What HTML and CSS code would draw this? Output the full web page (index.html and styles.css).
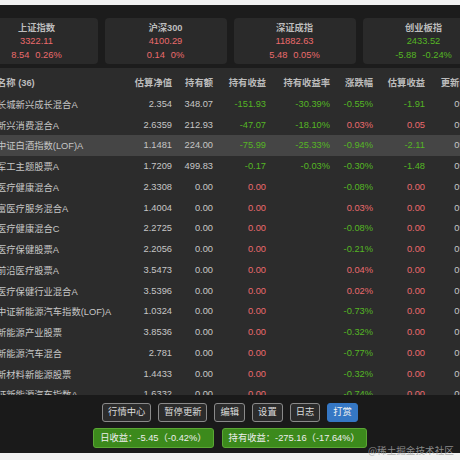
FILE: index.html
```html
<!DOCTYPE html>
<html lang="zh">
<head>
<meta charset="utf-8">
<link rel="stylesheet" href="styles.css">
</head>
<body>
<div class="app">
  <div class="scroller">
    <div class="cards">
      <div class="card"><div class="ct">上证指数</div><div class="up">3322.11</div><div class="up">8.54<span class="pct">0.26%</span></div></div>
      <div class="card"><div class="ct">沪深300</div><div class="up">4100.29</div><div class="up">0.14<span class="pct">0%</span></div></div>
      <div class="card"><div class="ct">深证成指</div><div class="up">11882.63</div><div class="up">5.48<span class="pct">0.05%</span></div></div>
      <div class="card"><div class="ct">创业板指</div><div class="down">2433.52</div><div class="down">-5.88<span class="pct">-0.24%</span></div></div>
    </div>
    <div class="table">
      <div class="row head"><span class="name">名称 (36)</span><span>估算净值</span><span>持有额</span><span>持有收益</span><span>持有收益率</span><span>涨跌幅</span><span>估算收益</span><span>更新时间</span></div>
      <div class="row"><span class="name">长城新兴成长混合A</span><span>2.354</span><span>348.07</span><span class="down">-151.93</span><span class="down">-30.39%</span><span class="down">-0.55%</span><span class="down">-1.91</span><span>09-23</span></div>
      <div class="row"><span class="name">新兴消费混合A</span><span>2.6359</span><span>212.93</span><span class="down">-47.07</span><span class="down">-18.10%</span><span class="up">0.03%</span><span class="up">0.05</span><span>09-23</span></div>
      <div class="row hl"><span class="name">中证白酒指数(LOF)A</span><span>1.1481</span><span>224.00</span><span class="down">-75.99</span><span class="down">-25.33%</span><span class="down">-0.94%</span><span class="down">-2.11</span><span>09-23</span></div>
      <div class="row"><span class="name">军工主题股票A</span><span>1.7209</span><span>499.83</span><span class="down">-0.17</span><span class="down">-0.03%</span><span class="down">-0.30%</span><span class="down">-1.48</span><span>09-23</span></div>
      <div class="row"><span class="name">医疗健康混合A</span><span>2.3308</span><span>0.00</span><span class="up">0.00</span><span></span><span class="down">-0.08%</span><span class="up">0.00</span><span>09-23</span></div>
      <div class="row"><span class="name">富医疗服务混合A</span><span>1.4004</span><span>0.00</span><span class="up">0.00</span><span></span><span class="up">0.03%</span><span class="up">0.00</span><span>09-23</span></div>
      <div class="row"><span class="name">医疗健康混合C</span><span>2.2725</span><span>0.00</span><span class="up">0.00</span><span></span><span class="down">-0.08%</span><span class="up">0.00</span><span>09-23</span></div>
      <div class="row"><span class="name">医疗保健股票A</span><span>2.2056</span><span>0.00</span><span class="up">0.00</span><span></span><span class="down">-0.21%</span><span class="up">0.00</span><span>09-23</span></div>
      <div class="row"><span class="name">前沿医疗股票A</span><span>3.5473</span><span>0.00</span><span class="up">0.00</span><span></span><span class="up">0.04%</span><span class="up">0.00</span><span>09-23</span></div>
      <div class="row"><span class="name">医疗保健行业混合A</span><span>3.5396</span><span>0.00</span><span class="up">0.00</span><span></span><span class="up">0.02%</span><span class="up">0.00</span><span>09-23</span></div>
      <div class="row"><span class="name">中证新能源汽车指数(LOF)A</span><span>1.0324</span><span>0.00</span><span class="up">0.00</span><span></span><span class="down">-0.73%</span><span class="up">0.00</span><span>09-23</span></div>
      <div class="row"><span class="name">新能源产业股票</span><span>3.8536</span><span>0.00</span><span class="up">0.00</span><span></span><span class="down">-0.32%</span><span class="up">0.00</span><span>09-23</span></div>
      <div class="row"><span class="name">新能源汽车混合</span><span>2.781</span><span>0.00</span><span class="up">0.00</span><span></span><span class="down">-0.77%</span><span class="up">0.00</span><span>09-23</span></div>
      <div class="row"><span class="name">新材料新能源股票</span><span>1.4433</span><span>0.00</span><span class="up">0.00</span><span></span><span class="down">-0.32%</span><span class="up">0.00</span><span>09-23</span></div>
      <div class="row"><span class="name">证新能源汽车指数A</span><span>1.6332</span><span>0.00</span><span class="up">0.00</span><span></span><span class="down">-0.74%</span><span class="up">0.00</span><span>09-23</span></div>
    </div>
  </div>
  <div class="footer">
    <div class="btns">
      <span class="btn">行情中心</span><span class="btn">暂停更新</span><span class="btn">编辑</span><span class="btn">设置</span><span class="btn">日志</span><span class="btn primary">打赏</span>
    </div>
    <div class="badges">
      <span class="badge">日收益：-5.45（-0.42%）</span><span class="badge">持有收益：-275.16（-17.64%）</span>
    </div>
  </div>
</div>
<div class="mark">@稀土掘金技术社区</div>
</body>
</html>
```
FILE: styles.css
```css
html, body {
  margin: 0;
  padding: 0;
  background: #f1f1f1;
  width: 460px;
  height: 460px;
  overflow: hidden;
  font-family: "Liberation Sans", "Noto Sans CJK SC", sans-serif;
  font-size: 9.3px;
}
.app {
  margin-top: 5px;
  height: 448px;
  background: #1c1c1c;
  overflow: hidden;
  display: flex;
  flex-direction: column;
}
.scroller {
  margin-left: -25px;
  width: 540px;
  height: 390px;
  overflow: hidden;
}
.cards {
  display: flex;
  gap: 7px;
  padding-top: 13px;
  height: 50px;
  box-sizing: border-box;
  padding-left: 0.5px;
}
.card {
  flex: 0 0 122px;
  height: 46px;
  background: #2a2a2a;
  border-radius: 4px;
  box-sizing: border-box;
  padding-top: 3.5px;
  text-align: center;
  line-height: 13.5px;
  color: #c4c4c4;
}
.ct { font-weight: bold; color: #bdbdbd; }
.pct { margin-left: 6px; }
.up { color: #ea6a6c; }
.down { color: #55b624; }
.table {
  margin-top: 13px;
  background: #2c2c2c;
  height: 327px;
  overflow: hidden;
}
.row {
  display: grid;
  grid-template-columns: 123px 52px 41px 53px 64px 43px 52px 53px;
  padding-left: 22px;
  height: 20.75px;
  align-items: center;
  color: #c6c6c6;
  white-space: nowrap;
}
.row span { text-align: right; }
.row span.name { text-align: left; }
.row span.up { color: #ea6a6c; }
.row span.down { color: #55b624; }
.row.head {
  height: 25.5px;
  padding-top: 3px;
  box-sizing: border-box;
  font-weight: bold;
  color: #bcbcbc;
}
.row.hl { background: #454545; }
.footer {
  flex: 1;
  background: #1a1a1a;
  display: flex;
  flex-direction: column;
  align-items: center;
  padding-top: 8px;
  gap: 6px;
}
.btns { display: flex; gap: 7px; }
.btn {
  height: 19px;
  box-sizing: border-box;
  border: 1px solid #8a8a8a;
  border-radius: 3px;
  background: #2b2b2b;
  color: #dcdcdc;
  padding: 0 5px;
  line-height: 17px;
}
.btn.primary {
  background: #3577c4;
  border-color: #3577c4;
  color: #f2f2f2;
}
.badges { display: flex; gap: 8px; }
.badge {
  height: 20px;
  box-sizing: border-box;
  background: #3c8a1c;
  border: 1px solid #5ba735;
  border-radius: 3px;
  color: #eeeeee;
  padding: 0 6px;
  line-height: 18px;
}
.mark {
  position: absolute;
  left: 368px;
  top: 443px;
  font-size: 9.6px;
  color: rgba(160, 160, 160, 0.85);
  font-family: "Noto Sans CJK SC", sans-serif;
  white-space: nowrap;
}
```
